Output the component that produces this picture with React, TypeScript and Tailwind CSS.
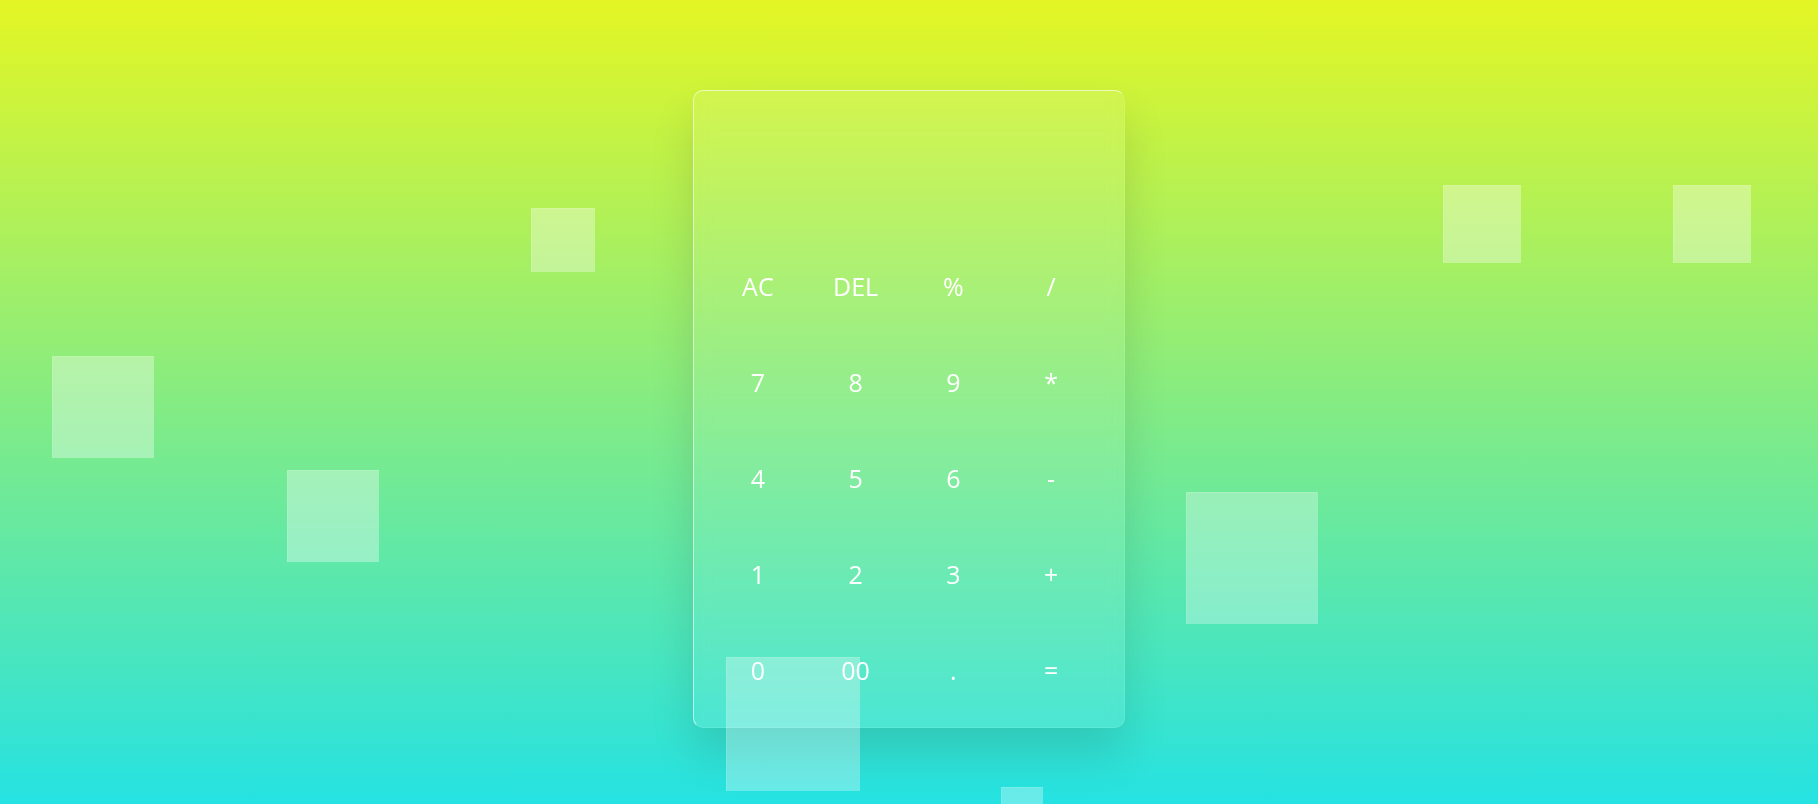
import React from "react";

const keys: string[] = [
    "AC", "DEL", "%", "/",
    "7", "8", "9", "*",
    "4", "5", "6", "-",
    "1", "2", "3", "+",
    "0", "00", ".", "=",
];

const App = (): React.JSX.Element => {
    return (
        <div className="relative h-[804px] w-full overflow-hidden bg-[linear-gradient(to_bottom,#e4f624,#25e2e2)] font-['Open_Sans',sans-serif]">
            {/* floating glass squares behind the calculator */}
            <div className="absolute left-[531px] top-[208px] w-[64px] h-[64px] bg-white/35 border-t border-l border-white/10"/>
            <div className="absolute left-[52px] top-[356px] w-[102px] h-[102px] bg-white/35 border-t border-l border-white/10"/>
            <div className="absolute left-[287px] top-[470px] w-[92px] h-[92px] bg-white/35 border-t border-l border-white/10"/>
            <div className="absolute left-[1443px] top-[185px] w-[78px] h-[78px] bg-white/35 border-t border-l border-white/10"/>
            <div className="absolute left-[1673px] top-[185px] w-[78px] h-[78px] bg-white/35 border-t border-l border-white/10"/>

            <div className="flex justify-center pt-[90px]">
                <div
                    className="relative w-[432px] h-[638px] rounded-[10px] bg-white/10 border border-t-white/60 border-l-white/60 border-r-white/10 border-b-white/10 shadow-[0_25px_45px_rgba(0,0,0,0.12)] backdrop-blur-sm">
                    <div className="h-[147px]"/>
                    <div className="grid grid-cols-4 w-[391px] ml-[15px]">
                        {keys.map((key, index) => (
                            <button
                                key={index}
                                className="h-[96px] flex items-center justify-center text-white text-[25px] leading-none"
                            >
                                {key}
                            </button>
                        ))}
                    </div>
                </div>
            </div>

            {/* squares laid over the calculator */}
            <div className="absolute left-[1186px] top-[492px] w-[132px] h-[132px] bg-white/30 border-t border-l border-white/10"/>
            <div className="absolute left-[726px] top-[657px] w-[134px] h-[134px] bg-white/30 border-t border-l border-white/10"/>
            <div className="absolute left-[1001px] top-[787px] w-[42px] h-[42px] bg-white/30 border-t border-l border-white/10"/>
        </div>
    );
};

export default App;
